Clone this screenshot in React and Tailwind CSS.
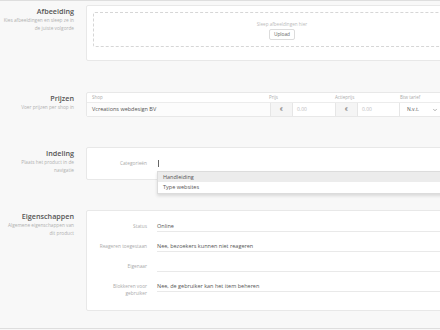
import React from 'react';
import { ChevronDown } from 'lucide-react';

const Section = ({ title, lines, children, className = '' }) => (
  <div className={`flex ${className}`}>
    <div className="w-[86px] shrink-0 pr-[12px] text-right">
      <h2 className="mt-[1px] text-[7.2px] leading-[10px] font-semibold text-[#555]">{title}</h2>
      <p className="text-[4.75px] leading-[8px] text-[#b0b0b0] whitespace-nowrap">
        {lines.map((l, i) => (
          <span key={i} className="block">{l}</span>
        ))}
      </p>
    </div>
    <div className="w-[392px] shrink-0">{children}</div>
  </div>
);

const PropRow = ({ label, value }) => (
  <div className="flex h-[20px]">
    <div className="w-[60px] shrink-0 pt-[10.5px] text-right text-[4.8px] leading-[7px] text-[#aaa]">
      {label}
    </div>
    <div className="ml-[10px] flex-1 pt-[10px] border-b border-[#e9e9e9] text-[5.5px] leading-[8px] text-[#555] whitespace-nowrap">
      {value}
    </div>
  </div>
);

export default function App() {
  return (
    <div className="w-[440px] h-[330px] overflow-hidden bg-[#f8f8f8] border-t-[1.5px] border-[#dedede] font-['Open_Sans',sans-serif]">
      <div className="pt-[4px]">
        <Section title="Afbeelding" lines={['Kies afbeeldingen en sleep ze in', 'de juiste volgorde']}>
          <div className="h-[56px] bg-white border border-[#e8e8e8] rounded-[2px] px-[6px] pt-[6px]">
            <div className="h-[35px] border border-dashed border-[#d6d6d6] rounded-[2px] flex flex-col items-center justify-center">
              <span className="text-[4.6px] leading-[8px] text-[#bbb]">Sleep afbeeldingen hier</span>
              <button className="mt-[1px] h-[11px] px-[4px] border border-[#dcdcdc] rounded-[2px] bg-white text-[4.8px] leading-[9px] text-[#666]">
                Upload
              </button>
            </div>
          </div>
        </Section>

        <Section title="Prijzen" lines={['Voer prijzen per shop in']} className="mt-[31px]">
          <div className="bg-white border border-[#e8e8e8] rounded-[2px]">
            <div className="flex h-[10px] items-center border-b border-[#ececec] text-[4.5px] text-[#aaa]">
              <span className="w-[182px] pl-[5px]">Shop</span>
              <span className="w-[66px]">Prijs</span>
              <span className="w-[65px]">Actieprijs</span>
              <span className="flex-1">Btw tarief</span>
            </div>
            <div className="flex h-[13px] text-[5px]">
              <div className="w-[183px] pl-[5px] flex items-center text-[5.5px] text-[#555] bg-[#fcfcfc]">
                Vcreations webdesign BV
              </div>
              <div className="w-[23px] flex items-center justify-center bg-[#f5f5f5] border-x border-[#e6e6e6] text-[#777]">€</div>
              <div className="w-[42px] pl-[4px] flex items-center text-[#bbb]">0.00</div>
              <div className="w-[23px] flex items-center justify-center bg-[#f5f5f5] border-x border-[#e6e6e6] text-[#777]">€</div>
              <div className="w-[41px] pl-[4px] flex items-center text-[#bbb]">0.00</div>
              <div className="w-[40px] pl-[7px] flex items-center justify-between pr-[1px] border-l border-[#e6e6e6] text-[#555]">
                <span>N.v.t.</span>
                <ChevronDown size={6} strokeWidth={2} className="text-[#666]" />
              </div>
              <div className="flex-1" />
            </div>
          </div>
        </Section>

        <Section title="Indeling" lines={['Plaats het product in de', 'navigatie']} className="mt-[30px]">
          <div className="relative h-[33px] bg-white border border-[#e8e8e8] rounded-[2px] flex items-center">
            <div className="w-[60px] shrink-0 text-right text-[4.8px] text-[#aaa]">Categorieën</div>
            <div className="ml-[11px] w-[1px] h-[7px] bg-[#666]" />
            <div className="absolute left-[70px] top-[23px] w-[330px] bg-white border border-[#dcdcdc] shadow-[0_2px_3px_rgba(0,0,0,0.12)] pb-[1px] text-[5.5px] text-[#555]">
              <div className="h-[10px] pl-[5px] flex items-center bg-[#ececec]">Handleiding</div>
              <div className="h-[10px] pl-[5px] flex items-center">Type websites</div>
            </div>
          </div>
        </Section>

        <Section title="Eigenschappen" lines={['Algemene eigenschappen van', 'dit product']} className="mt-[30px]">
          <div className="h-[101px] bg-white border border-[#e8e8e8] rounded-[2px] pt-[1px] pr-[8px]">
            <PropRow label="Status" value="Online" />
            <PropRow label="Reageren toegestaan" value="Nee, bezoekers kunnen niet reageren" />
            <PropRow label="Eigenaar" value="" />
            <PropRow label={<>Blokkeren voor<br />gebruiker</>} value="Nee, de gebruiker kan het item beheren" />
          </div>
        </Section>

        <div className="mt-[17px] border-t-[1.5px] border-[#dedede]" />
      </div>
    </div>
  );
}
